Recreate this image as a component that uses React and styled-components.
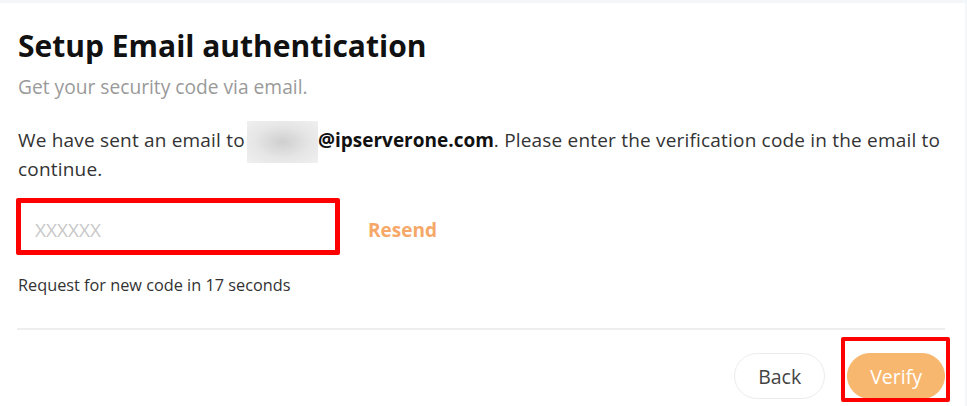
import React from "react";
import styled, { createGlobalStyle } from "styled-components";

const GlobalStyle = createGlobalStyle`
    html, body {
        margin: 0;
        padding: 0;
        background: #f3f7fa;
        font-family: "Open Sans", "Liberation Sans", sans-serif;
    }
`;

function App() {
    return (
        <>
            <GlobalStyle />
            <Card>
                <Title>Setup Email authentication</Title>
                <Subtitle>Get your security code via email.</Subtitle>

                <Message>
                    We have sent an email to <Blurred />
                    <b>@ipserverone.com</b>. Please enter the verification code in the email to
                    continue.
                </Message>

                {/* 코드 입력 */}
                <CodeRow>
                    <Marked>
                        <CodeInput type="text" placeholder="XXXXXX" />
                    </Marked>
                    <LinkButton type="button">Resend</LinkButton>
                </CodeRow>
                <Hint>Request for new code in 17 seconds</Hint>

                <Divider />

                <Actions>
                    <PillButton type="button">Back</PillButton>
                    <VerifyMark>
                        <PillButton type="button" $primary>
                            Verify
                        </PillButton>
                    </VerifyMark>
                </Actions>
            </Card>
        </>
    );
}

export default App;

const Card = styled.div`
    margin: 3px 2px 0 0;
    background: #ffffff;
    padding: 23px 20px 0 18px;
    height: 403px;
    box-sizing: border-box;
    overflow: hidden;
`;

const Title = styled.h2`
    margin: 0;
    font-size: 30px;
    line-height: 40px;
    font-weight: 700;
    color: #111111;
`;

const Subtitle = styled.p`
    margin: 8px 0 0;
    font-size: 19.2px;
    line-height: 26px;
    color: #9a9a9a;
`;

const Message = styled.p`
    margin: 26px 0 0;
    font-size: 19px;
    line-height: 29px;
    color: #333333;
    letter-spacing: 0.01em;

    b {
        font-weight: 700;
        color: #111111;
        letter-spacing: 0;
    }
`;

const Blurred = styled.span`
    display: inline-block;
    width: 71px;
    height: 42px;
    margin: -14px 0 -14px -3px;
    vertical-align: middle;
    background: radial-gradient(ellipse at center, #cfcfcf 0%, #e6e6e6 55%, #f0f0f0 100%);
`;

const CodeRow = styled.div`
    display: flex;
    align-items: center;
    gap: 30px;
    margin-top: 16px;
`;

const Marked = styled.div`
    position: relative;
    display: flex;

    &::after {
        content: "";
        position: absolute;
        inset: -2px;
        border: 5px solid #ff0000;
        border-radius: 2px;
        pointer-events: none;
    }
`;

const CodeInput = styled.input`
    width: 320px;
    height: 53px;
    box-sizing: border-box;
    border: 1px solid #dddddd;
    padding: 6px 16px 0;
    font-family: inherit;
    font-size: 19px;
    color: #333333;
    outline: none;

    &::placeholder {
        color: #c8c8c8;
    }
`;

const LinkButton = styled.button`
    border: 0;
    background: none;
    padding: 6px 0 0;
    font-family: inherit;
    font-size: 19px;
    font-weight: 700;
    color: #f6a868;
    cursor: pointer;
`;

const Hint = styled.p`
    margin: 21px 0 0;
    font-size: 16.3px;
    line-height: 22px;
    color: #333333;
`;

const Divider = styled.hr`
    margin: 32px 0 0 -1px;
    border: 0;
    border-top: 2px solid #eeeeee;
`;

const Actions = styled.div`
    display: flex;
    justify-content: flex-end;
    align-items: flex-start;
    gap: 22px;
    margin-top: 23px;
`;

const PillButton = styled.button`
    height: 46px;
    padding: 0 ${(p) => (p.$primary ? "22px" : "23px")};
    border-radius: 23px;
    border: 1px solid ${(p) => (p.$primary ? "#f8b76f" : "#ececec")};
    background: ${(p) => (p.$primary ? "#f8b76f" : "#ffffff")};
    color: ${(p) => (p.$primary ? "#ffffff" : "#444444")};
    font-family: inherit;
    font-size: 19.5px;
    cursor: pointer;
`;

const VerifyMark = styled.div`
    position: relative;
    display: flex;

    &::after {
        content: "";
        position: absolute;
        top: -16px;
        left: -6px;
        right: -5px;
        bottom: -3px;
        border: 4px solid #ff0000;
        border-radius: 2px;
        pointer-events: none;
    }
`;
